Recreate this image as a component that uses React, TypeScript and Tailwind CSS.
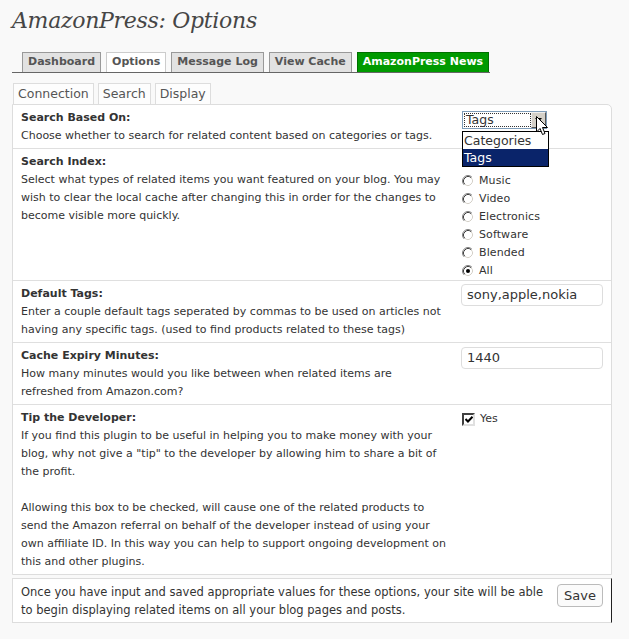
import React from 'react';

const mainTabs = [
  { label: 'Dashboard', kind: 'off' },
  { label: 'Options', kind: 'on' },
  { label: 'Message Log', kind: 'off' },
  { label: 'View Cache', kind: 'off' },
  { label: 'AmazonPress News', kind: 'news' },
];

const subTabs = ['Connection', 'Search', 'Display'];

const indexes = ['Music', 'Video', 'Electronics', 'Software', 'Blended', 'All'];

function Radio({ checked }: { checked?: boolean }) {
  return (
    <svg width="12" height="12" viewBox="0 0 12 12" className="shrink-0">
      <circle cx="6" cy="6" r="5.5" fill="#fff" />
      <path d="M2.11 9.89 A5.5 5.5 0 0 1 9.89 2.11" fill="none" stroke="#808080" strokeWidth="1" />
      <path d="M2.82 9.18 A4.5 4.5 0 0 1 9.18 2.82" fill="none" stroke="#404040" strokeWidth="1" />
      <path d="M9.18 2.82 A4.5 4.5 0 0 1 2.82 9.18" fill="none" stroke="#d4d0c8" strokeWidth="1" />
      {checked && <circle cx="6" cy="6" r="2" fill="#000" />}
    </svg>
  );
}

function Row({ label, children, right, rightClass }: { label: string; children: React.ReactNode; right: React.ReactNode; rightClass?: string }) {
  return (
    <div className="grid grid-cols-[449px_1fr] border-t border-[#dfdfdf] first:border-t-0">
      <div className="pl-2 pr-[16px] pt-1 pb-[3px] text-[11px] leading-[18px] text-[#333]">
        <div className="font-bold">{label}</div>
        <div>{children}</div>
      </div>
      <div className={rightClass}>{right}</div>
    </div>
  );
}

export default function App() {
  return (
    <div className="min-h-screen bg-[#f9f9f9] pl-3 pr-[17px] pt-[5px] font-['DejaVu_Sans',Verdana,sans-serif] text-[#333]">
      <h2 className="font-['DejaVu_Serif',Georgia,serif] italic text-[22px] leading-[32px] text-[#464646] tracking-[-0.3px]">
        AmazonPress: Options
      </h2>

      <div className="mt-[15px] flex w-[478px] gap-[5px] border-b border-[#666] pl-[10px]">
        {mainTabs.map((t) => (
          <div
            key={t.label}
            className={
              'h-[20px] px-[5px] text-[11px] font-bold leading-[18px] border border-b-0 ' +
              (t.kind === 'on'
                ? 'bg-white border-[#ccc] text-[#555]'
                : t.kind === 'news'
                ? 'bg-[#009a00] border-[#007000] text-white'
                : 'bg-[#e2e2e2] border-[#999] text-[#555]')
            }
          >
            {t.label}
          </div>
        ))}
      </div>

      <div className="mt-[10px] flex gap-1 pl-[1px]">
        {subTabs.map((t) => (
          <div key={t} className="h-[21px] border border-b-0 border-[#ddd] bg-[#fdfdfd] px-[4px] text-[12.5px] leading-[20px] text-[#555]">
            {t}
          </div>
        ))}
      </div>

      <div className="w-[600px] rounded-tr-[5px] border border-[#ddd] bg-white">
        <Row
          label="Search Based On:"
          rightClass="relative pt-[6px]"
          right={
            <div className="relative w-[85px]">
              <div className="flex h-[18px] items-center border border-[#7f9db9] bg-white text-[12.5px]">
                <div className="ml-[1px] h-[14px] flex-1 border border-dotted border-[#333] pl-[1px] leading-[12px]">Tags</div>
                <div className="flex h-[16px] w-[15px] items-center justify-center border border-t-[#eee] border-l-[#eee] border-b-[#555] border-r-[#555] bg-[#d4d0c8]">
                  <svg width="7" height="4" viewBox="0 0 7 4"><path d="M0 0h7L3.5 4z" fill="#000" /></svg>
                </div>
              </div>
              <div className="absolute left-0 top-[20px] z-10 w-[87px] border border-black bg-white text-[12.5px] leading-[17px]">
                <div className="pl-[1px]">Categories</div>
                <div className="bg-[#0a246a] pl-[1px] text-white">Tags</div>
              </div>
              <svg className="absolute left-[74px] top-[5px] z-20" width="13" height="21" viewBox="0 0 13 21">
                <path d="M0.5 0.5 L0.5 16 L4 12.5 L6.5 18.5 L9 17.5 L6.5 11.5 L11.5 11.5 Z" fill="#fff" stroke="#000" strokeWidth="1" />
              </svg>
            </div>
          }
        >
          Choose whether to search for related content based on categories or tags.
        </Row>

        <Row
          label="Search Index:"
          rightClass="pt-[23px]"
          right={
            <div className="flex flex-col">
              {indexes.map((i) => (
                <label key={i} className="flex h-[18px] items-center gap-[5px] text-[11px] tracking-[0.1px]">
                  <Radio checked={i === 'All'} />
                  <span>{i}</span>
                </label>
              ))}
            </div>
          }
        >
          Select what types of related items you want featured on your blog. You may wish to clear the local cache after changing this in order for the changes to become visible more quickly.
        </Row>

        <Row
          label="Default Tags:"
          rightClass="pt-[3px] -ml-px"
          right={
            <div className="h-[22px] w-[142px] rounded-[4px] border border-[#ddd] bg-white pl-[5px] text-[13px] leading-[20px]">sony,apple,nokia</div>
          }
        >
          Enter a couple default tags seperated by commas to be used on articles not having any specific tags. (used to find products related to these tags)
        </Row>

        <Row
          label="Cache Expiry Minutes:"
          rightClass="pt-[4px] -ml-px"
          right={
            <div className="h-[22px] w-[142px] rounded-[4px] border border-[#ddd] bg-white pl-[5px] text-[13px] leading-[20px]">1440</div>
          }
        >
          How many minutes would you like between when related items are refreshed from Amazon.com?
        </Row>

        <Row
          label="Tip the Developer:"
          rightClass="pt-[6px]"
          right={
            <label className="flex items-center gap-[5px] text-[11px]">
              <span className="flex h-[13px] w-[13px] items-center justify-center border-2 border-t-[#404040] border-l-[#404040] border-b-[#e0e0e0] border-r-[#e0e0e0] bg-white">
                <svg width="8" height="7" viewBox="0 0 8 7"><path d="M0.5 3 L3 5.5 L7.5 0.8" fill="none" stroke="#000" strokeWidth="2" /></svg>
              </span>
              <span>Yes</span>
            </label>
          }
        >
          If you find this plugin to be useful in helping you to make money with your blog, why not give a "tip" to the developer by allowing him to share a bit of the profit.
          <br />
          <br />
          Allowing this box to be checked, will cause one of the related products to send the Amazon referral on behalf of the developer instead of using your own affiliate ID. In this way you can help to support ongoing development on this and other plugins.
        </Row>
      </div>

      <div className="mt-[3px] flex w-[600px] items-start justify-between border border-[#ddd] border-r-[#222] bg-white pl-2 pr-2 pt-[4px] pb-[3px]">
        <p className="w-[530px] text-[11.5px] leading-[18px]">
          Once you have input and saved appropriate values for these options, your site will be able to begin displaying related items on all your blog pages and posts.
        </p>
        <button className="mt-[1px] h-[23px] rounded-[4px] border border-[#bbb] bg-[#fbfbfb] px-[6px] text-[13px] text-[#333]">
          Save
        </button>
      </div>
    </div>
  );
}
